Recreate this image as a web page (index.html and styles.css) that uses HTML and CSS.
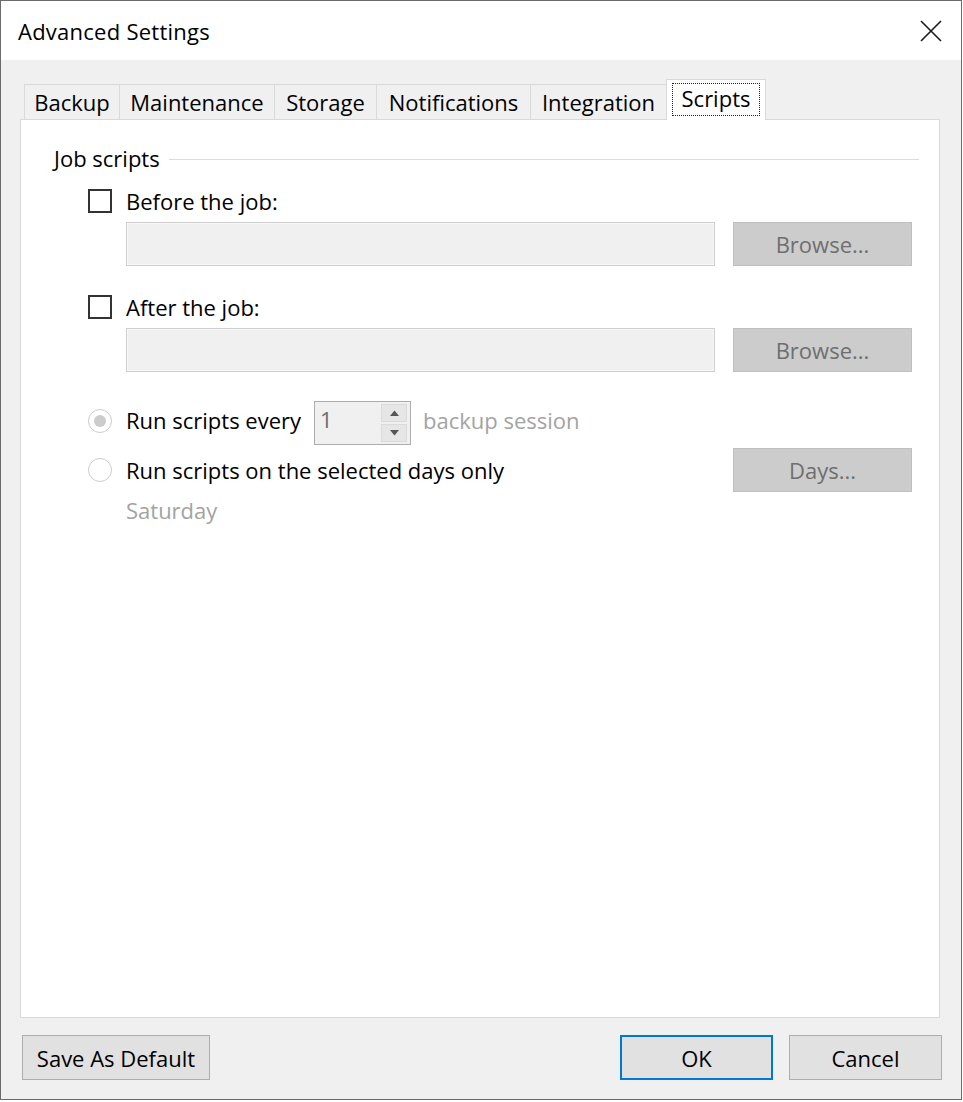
FILE: index.html
```html
<!DOCTYPE html>
<html>
<head>
<meta charset="utf-8">
<link rel="stylesheet" href="styles.css">
</head>
<body>
<div class="window">
  <div class="titlebar">
    <span class="title">Advanced Settings</span>
    <svg class="close" width="22" height="22" viewBox="0 0 22 22"><path d="M1 1 L21 21 M21 1 L1 21" stroke="#1a1a1a" stroke-width="1.6" fill="none"/></svg>
  </div>
  <div class="body">
    <div class="tabs">
      <div class="tab t-backup">Backup</div>
      <div class="tab t-maint">Maintenance</div>
      <div class="tab t-storage">Storage</div>
      <div class="tab t-notif">Notifications</div>
      <div class="tab t-integ">Integration</div>
      <div class="tab tab-active"><span class="focus">Scripts</span></div>
    </div>
    <div class="panel">
      <div class="group-header">
        <span class="group-title">Job scripts</span>
        <span class="group-line"></span>
      </div>
      <div class="check-row first">
        <span class="checkbox"></span>
        <span class="label">Before the job:</span>
      </div>
      <div class="field-row">
        <div class="field"></div>
        <div class="btn-disabled">Browse...</div>
      </div>
      <div class="check-row second">
        <span class="checkbox"></span>
        <span class="label">After the job:</span>
      </div>
      <div class="field-row">
        <div class="field"></div>
        <div class="btn-disabled">Browse...</div>
      </div>
      <div class="radio-row r1">
        <span class="radio checked"><span class="dot"></span></span>
        <span class="label">Run scripts every</span>
        <div class="spinner">
          <span class="spin-value">1</span>
          <div class="spin-btns">
            <div class="spin-btn"><svg width="9" height="6" viewBox="0 0 9 6"><path d="M0 6 L4.5 0.5 L9 6 Z" fill="#555"/></svg></div>
            <div class="spin-btn"><svg width="9" height="6" viewBox="0 0 9 6"><path d="M0 0 L4.5 5.5 L9 0 Z" fill="#555"/></svg></div>
          </div>
        </div>
        <span class="muted">backup session</span>
      </div>
      <div class="radio-row r2">
        <span class="radio"></span>
        <span class="label">Run scripts on the selected days only</span>
        <div class="btn-disabled push">Days...</div>
      </div>
      <div class="days-text muted">Saturday</div>
    </div>
    <div class="footer">
      <div class="btn btn-save">Save As Default</div>
      <div class="footer-right">
        <div class="btn btn-default">OK</div>
        <div class="btn">Cancel</div>
      </div>
    </div>
  </div>
</div>
</body>
</html>
```

FILE: styles.css
```css
html, body {
  margin: 0;
  padding: 0;
  background: #ffffff;
}
body {
  width: 963px;
  height: 1102px;
  font-family: "Open Sans", "Noto Sans", sans-serif;
  font-size: 22px;
  color: #000;
}
.window {
  width: 962px;
  height: 1100px;
  box-sizing: border-box;
  border: 1px solid #6b6b6b;
  display: flex;
  flex-direction: column;
  background: #f0f0f0;
}
.titlebar {
  height: 59px;
  background: #fff;
  display: flex;
  align-items: center;
  justify-content: space-between;
  padding: 0 19px 0 17px;
  flex: none;
}
.title {
  line-height: 26px;
  margin-top: 0;
  letter-spacing: 0.25px;
}
.close {
  display: block;
  margin-top: 1px;
}
.body {
  flex: 1;
  display: flex;
  flex-direction: column;
  padding: 19px 21px 19px 19px;
  min-height: 0;
}
.tabs {
  display: flex;
  align-items: flex-end;
  height: 41px;
  padding-left: 4px;
  flex: none;
  position: relative;
  z-index: 1;
}
.tab {
  height: 35px;
  box-sizing: border-box;
  border: 1px solid #d9d9d9;
  border-bottom: none;
  margin-left: -1px;
  margin-bottom: 1px;
  display: flex;
  align-items: center;
  justify-content: center;
  line-height: 26px;
  background: #f0f0f0;
}
.tab:first-child { margin-left: 0; }
.t-backup { width: 96px; }
.t-maint { width: 156px; }
.t-storage { width: 103px; }
.t-notif { width: 155px; }
.t-integ { width: 137px; }
.tab-active {
  width: 100px;
  height: 41px;
  margin-bottom: 0;
  background: #fff;
  align-items: flex-start;
  padding-top: 3px;
}
.focus {
  border: 1px dotted #222;
  padding: 1px 9px 4px 9px;
  line-height: 26px;
}
.panel {
  flex: 1;
  margin-top: -1px;
  background: #fff;
  border: 1px solid #d9d9d9;
  padding: 25px 26px 0 33px;
  display: flex;
  flex-direction: column;
}
.group-header {
  display: flex;
  align-items: center;
  gap: 9px;
  height: 26px;
}
.group-title {
  line-height: 26px;
}
.group-line {
  flex: 1;
  height: 1px;
  background: #dcdcdc;
  margin-right: -6px;
  margin-top: 2px;
}
.check-row {
  display: flex;
  align-items: center;
  margin-left: 34px;
  height: 24px;
}
.check-row.first { margin-top: 18px; }
.check-row.second { margin-top: 29px; }
.checkbox {
  width: 24px;
  height: 24px;
  box-sizing: border-box;
  border: 2px solid #333;
  background: #fff;
  flex: none;
}
.label {
  margin-left: 14px;
  line-height: 26px;
  white-space: nowrap;
  margin-top: -1px;
}
.field-row {
  display: flex;
  margin-left: 72px;
  margin-top: 9px;
  gap: 18px;
  height: 44px;
}
.field {
  width: 589px;
  box-sizing: border-box;
  border: 1px solid #cfcfcf;
  background: #f0f0f0;
  box-shadow: inset 0 0 0 1px #f7f7f7;
}
.btn-disabled {
  width: 179px;
  height: 44px;
  box-sizing: border-box;
  border: 1px solid #bfbfbf;
  background: #cccccc;
  color: #6f6f6f;
  display: flex;
  align-items: center;
  justify-content: center;
  line-height: 26px;
}
.radio-row {
  display: flex;
  align-items: center;
  margin-left: 34px;
  height: 44px;
  width: 824px;
}
.radio-row.r1 { margin-top: 29px; }
.radio-row.r2 { margin-top: 3px; }
.radio {
  width: 24px;
  height: 24px;
  box-sizing: border-box;
  border: 1px solid #cccccc;
  border-radius: 50%;
  background: #fff;
  display: flex;
  align-items: center;
  justify-content: center;
  flex: none;
}
.r1 .radio { margin-top: -5px; }
.dot {
  width: 12px;
  height: 12px;
  border-radius: 50%;
  background: #cccccc;
}
.r1 .label { margin-top: -6px; }
.spinner {
  margin-left: 13px;
  width: 97px;
  height: 44px;
  box-sizing: border-box;
  border: 1px solid #adadad;
  background: #f0f0f0;
  display: flex;
  align-items: flex-start;
  justify-content: space-between;
  padding: 2px 3px 2px 5px;
  flex: none;
}
.spin-value {
  color: #6d6d6d;
  line-height: 26px;
  margin-top: 2px;
}
.spin-btns {
  display: flex;
  flex-direction: column;
  gap: 2px;
  width: 26px;
  height: 38px;
}
.spin-btn {
  flex: 1;
  background: #e6e6e6;
  border: 1px solid #dadada;
  display: flex;
  align-items: center;
  justify-content: center;
}
.muted {
  color: #a3a3a3;
  line-height: 26px;
}
.r1 .muted {
  margin-left: 12px;
  margin-top: -6px;
}
.push { margin-left: auto; }
.days-text {
  margin-left: 72px;
  margin-top: 5px;
}
.footer {
  flex: none;
  margin-top: 17px;
  display: flex;
  justify-content: space-between;
  margin-left: 2px;
  margin-right: -2px;
}
.footer-right {
  display: flex;
  gap: 16px;
}
.btn {
  height: 45px;
  box-sizing: border-box;
  border: 1px solid #adadad;
  background: #e1e1e1;
  display: flex;
  align-items: center;
  justify-content: center;
  line-height: 26px;
  padding: 0 13px;
}
.btn-save {
  width: 188px;
}
.footer-right .btn {
  width: 153px;
}
.btn-default {
  border: 2px solid #0078d7;
}
```
